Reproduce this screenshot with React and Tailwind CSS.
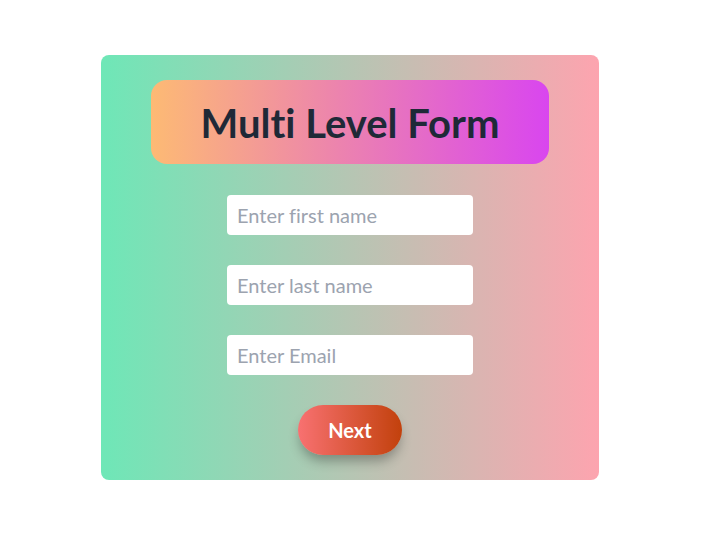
export default function App() {
  return (
    <div className="min-h-[547px] bg-white" style={{ fontFamily: "Lato, 'Open Sans', sans-serif" }}>
      <div className="ml-[101px] pt-[55px]">
        <div className="w-[498px] rounded-lg bg-linear-to-r/srgb from-[#6ee7b7] to-[#fda4af] flex flex-col items-center pt-[25px] pb-[25px]">
          <div className="w-[398px] h-[84px] rounded-2xl bg-linear-to-r/srgb from-[#fdba74] to-[#d946ef] flex items-center justify-center">
            <h1 className="text-[40px] font-bold text-[#1f2937] leading-none [font-variant-ligatures:none] mt-[2px]">Multi Level Form</h1>
          </div>
          <div className="mt-[31px] flex flex-col gap-[30px]">
            <input className="w-[246px] h-10 rounded bg-white px-2.5 text-[20px] text-gray-800 placeholder:text-[#9ca3af] outline-none [font-variant-ligatures:none]" placeholder="Enter first name" />
            <input className="w-[246px] h-10 rounded bg-white px-2.5 text-[20px] text-gray-800 placeholder:text-[#9ca3af] outline-none" placeholder="Enter last name" />
            <input className="w-[246px] h-10 rounded bg-white px-2.5 text-[20px] text-gray-800 placeholder:text-[#9ca3af] outline-none" placeholder="Enter Email" />
          </div>
          <button className="mt-[30px] w-[104px] h-[50px] rounded-full bg-linear-to-r/srgb from-[#f87171] to-[#c2410c] text-white text-xl font-bold shadow-[0_8px_12px_-2px_rgba(0,0,0,0.3)]">
            Next
          </button>
        </div>
      </div>
    </div>
  );
}
